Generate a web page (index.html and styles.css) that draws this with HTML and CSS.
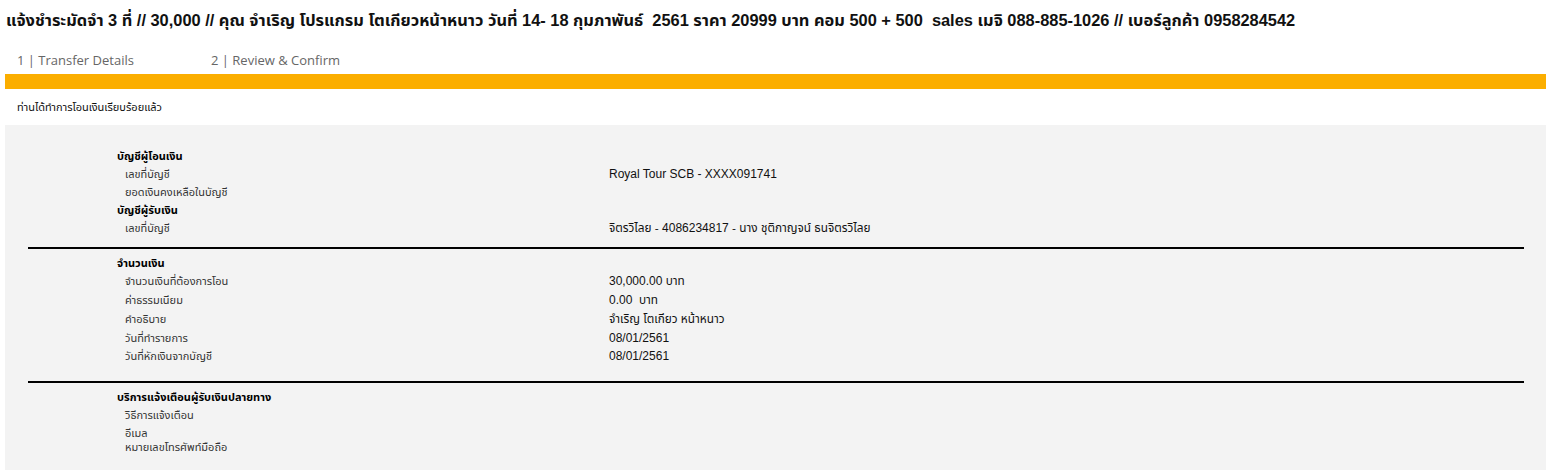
FILE: index.html
```html
<!DOCTYPE html>
<html lang="th">
<head>
<meta charset="utf-8">
<title>Transfer</title>
<link rel="stylesheet" href="styles.css">
</head>
<body>
<h1 class="title">แจ้งชำระมัดจำ 3 ที่ // 30,000 // คุณ จำเริญ โปรแกรม โตเกียวหน้าหนาว วันที่ 14- 18 กุมภาพันธ์&nbsp; 2561 ราคา 20999 บาท คอม 500 + 500&nbsp; sales เมจิ 088-885-1026 // เบอร์ลูกค้า 0958284542</h1>
<nav class="steps">
  <span class="step">1 | Transfer Details</span>
  <span class="step">2 | Review &amp; Confirm</span>
</nav>
<div class="progress"></div>
<p class="notice">ท่านได้ทำการโอนเงินเรียบร้อยแล้ว</p>
<section class="panel">
  <div class="group first">
    <div class="heading">บัญชีผู้โอนเงิน</div>
    <div class="row"><span class="label">เลขที่บัญชี</span><span class="value en">Royal Tour SCB - XXXX091741</span></div>
    <div class="row"><span class="label">ยอดเงินคงเหลือในบัญชี</span><span class="value"></span></div>
    <div class="heading">บัญชีผู้รับเงิน</div>
    <div class="row"><span class="label">เลขที่บัญชี</span><span class="value">จิตรวิไลย - <span class="en">4086234817</span> - นาง ชุติกาญจน์ ธนจิตรวิไลย</span></div>
  </div>
  <hr class="divider">
  <div class="group second">
    <div class="heading">จำนวนเงิน</div>
    <div class="row tall"><span class="label">จำนวนเงินที่ต้องการโอน</span><span class="value"><span class="en">30,000.00</span> บาท</span></div>
    <div class="row tall"><span class="label">ค่าธรรมเนียม</span><span class="value"><span class="en">0.00</span>&nbsp; บาท</span></div>
    <div class="row tall"><span class="label">คำอธิบาย</span><span class="value">จำเริญ โตเกียว หน้าหนาว</span></div>
    <div class="row"><span class="label">วันที่ทำรายการ</span><span class="value en">08/01/2561</span></div>
    <div class="row"><span class="label">วันที่หักเงินจากบัญชี</span><span class="value en">08/01/2561</span></div>
  </div>
  <hr class="divider">
  <div class="group third">
    <div class="heading">บริการแจ้งเตือนผู้รับเงินปลายทาง</div>
    <div class="row"><span class="label">วิธีการแจ้งเตือน</span><span class="value"></span></div>
    <div class="row compact"><span class="label">อีเมล<br>หมายเลขโทรศัพท์มือถือ</span><span class="value"></span></div>
  </div>
</section>
</body>
</html>
```

FILE: styles.css
```css
html, body {
  margin: 0;
  padding: 0;
  background: #ffffff;
}
body {
  padding: 0 19px 0 5px;
  font-family: "Liberation Sans", Arial, "Noto Sans Thai", sans-serif;
  color: #000;
}
.title {
  margin: 0;
  padding: 11px 0 0 1px;
  font-size: 16.4px;
  line-height: 19px;
  font-weight: bold;
  color: #111;
  white-space: nowrap;
}
.steps {
  display: flex;
  padding: 22px 0 0 12px;
  height: 22px;
}
.step {
  width: 194px;
  font-family: "Open Sans", "Liberation Sans", sans-serif;
  font-size: 13px;
  line-height: 16px;
  color: #666;
}
.progress {
  height: 15px;
  background: #fbae00;
}
.notice {
  margin: 0;
  padding: 11px 0 0 12px;
  height: 25px;
  font-size: 11px;
  line-height: 14px;
  color: #111;
}
.panel {
  background: #f3f3f3;
  padding: 22px 0 18px 0;
  min-height: 300px;
  box-sizing: border-box;
}
.group {
  padding-left: 112px;
}
.heading {
  font-size: 11px;
  font-weight: bold;
  line-height: 18px;
  color: #000;
}
.row {
  display: grid;
  grid-template-columns: 484px 1fr;
  padding-left: 8px;
  font-size: 11px;
  line-height: 18px;
  min-height: 18px;
}
.row.tall {
  line-height: 19px;
}
.row.compact {
  line-height: 14px;
  padding-top: 2px;
}
.label {
  color: #333;
}
.value {
  color: #111;
  font-size: 11.8px;
}
.en {
  font-size: 12px;
}
.divider {
  border: 0;
  height: 2px;
  background: #000;
  margin: 10px 22px 5px 23px;
}
.group.second + .divider {
  margin-top: 16px;
}
```
